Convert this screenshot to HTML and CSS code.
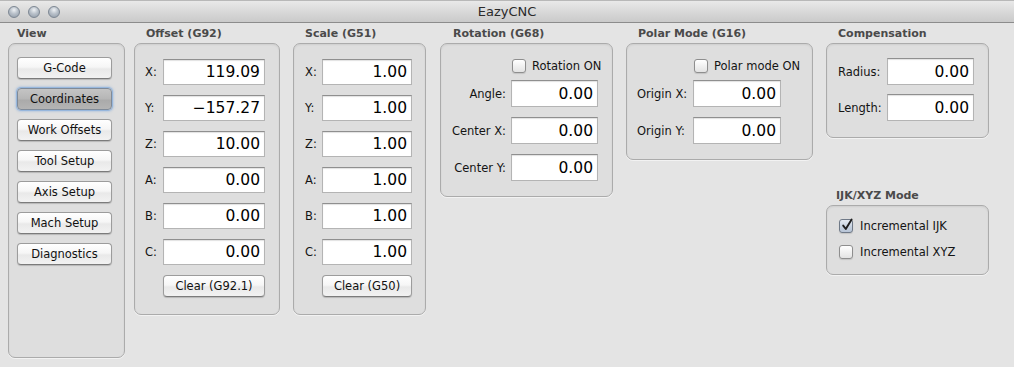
FILE: index.html
```html
<!DOCTYPE html>
<html>
<head>
<meta charset="utf-8">
<title>EazyCNC</title>
<link rel="stylesheet" href="styles.css">
</head>
<body>
<div class="window">
  <header class="titlebar">
    <div class="lights"><span class="light"></span><span class="light"></span><span class="light"></span></div>
    <div class="title">EazyCNC</div>
    <div></div>
  </header>
  <main class="content">
    <section class="col col-view">
      <h2 class="col-title t-view">View</h2>
      <div class="panel panel-view">
        <div class="btn">G-Code</div>
        <div class="btn btn-sel">Coordinates</div>
        <div class="btn">Work Offsets</div>
        <div class="btn">Tool Setup</div>
        <div class="btn">Axis Setup</div>
        <div class="btn">Mach Setup</div>
        <div class="btn">Diagnostics</div>
      </div>
    </section>

    <section class="col col-offset">
      <h2 class="col-title">Offset (G92)</h2>
      <div class="panel panel-offset">
        <div class="grid grid-offset">
          <span class="lbl">X:</span><div class="field">119.09</div>
          <span class="lbl">Y:</span><div class="field">−157.27</div>
          <span class="lbl">Z:</span><div class="field">10.00</div>
          <span class="lbl">A:</span><div class="field">0.00</div>
          <span class="lbl">B:</span><div class="field">0.00</div>
          <span class="lbl">C:</span><div class="field">0.00</div>
        </div>
        <div class="btn btn-clear-offset">Clear (G92.1)</div>
      </div>
    </section>

    <section class="col col-scale">
      <h2 class="col-title">Scale (G51)</h2>
      <div class="panel panel-scale">
        <div class="grid grid-scale">
          <span class="lbl">X:</span><div class="field">1.00</div>
          <span class="lbl">Y:</span><div class="field">1.00</div>
          <span class="lbl">Z:</span><div class="field">1.00</div>
          <span class="lbl">A:</span><div class="field">1.00</div>
          <span class="lbl">B:</span><div class="field">1.00</div>
          <span class="lbl">C:</span><div class="field">1.00</div>
        </div>
        <div class="btn btn-clear-scale">Clear (G50)</div>
      </div>
    </section>

    <section class="col col-rot">
      <h2 class="col-title t-rot">Rotation (G68)</h2>
      <div class="panel panel-rot">
        <div class="check-row rot-check"><span class="cb"></span><span>Rotation ON</span></div>
        <div class="grid grid-rot">
          <span class="lbl">Angle:</span><div class="field">0.00</div>
          <span class="lbl">Center X:</span><div class="field">0.00</div>
          <span class="lbl">Center Y:</span><div class="field">0.00</div>
        </div>
      </div>
    </section>

    <section class="col col-polar">
      <h2 class="col-title">Polar Mode (G16)</h2>
      <div class="panel panel-polar">
        <div class="check-row polar-check"><span class="cb"></span><span>Polar mode ON</span></div>
        <div class="grid grid-polar">
          <span class="lbl">Origin X:</span><div class="field">0.00</div>
          <span class="lbl">Origin Y:</span><div class="field">0.00</div>
        </div>
      </div>
    </section>

    <section class="col col-comp">
      <h2 class="col-title">Compensation</h2>
      <div class="panel panel-comp">
        <div class="grid grid-comp">
          <span class="lbl">Radius:</span><div class="field">0.00</div>
          <span class="lbl">Length:</span><div class="field">0.00</div>
        </div>
      </div>
      <h2 class="col-title t-ijk">IJK/XYZ Mode</h2>
      <div class="panel panel-ijk">
        <div class="check-row"><span class="cb cb-on"><svg width="14" height="14" viewBox="0 0 14 14"><path d="M3.2 7.6 L5.8 11 L11.6 1.6" fill="none" stroke="#1e1e1e" stroke-width="1.9" stroke-linecap="round" stroke-linejoin="round"/></svg></span><span>Incremental IJK</span></div>
        <div class="check-row"><span class="cb"></span><span>Incremental XYZ</span></div>
      </div>
    </section>
  </main>
</div>
</body>
</html>
```

FILE: styles.css
```css
* { box-sizing: border-box; }
html, body { margin: 0; padding: 0; }
body {
  width: 1014px;
  height: 367px;
  overflow: hidden;
  background: #e4e4e4;
  font-family: "DejaVu Sans", "Liberation Sans", sans-serif;
  font-size: 11.5px;
  color: #141414;
}
.window { width: 1014px; height: 367px; }

.titlebar {
  height: 23px;
  display: grid;
  grid-template-columns: 1fr auto 1fr;
  align-items: center;
  background: linear-gradient(#e9e9e9, #d6d6d6 60%, #cacaca);
  border-top: 1px solid #b8b8b8;
  border-bottom: 1px solid #8c8c8c;
}
.lights { display: flex; gap: 8px; padding-left: 8px; }
.light {
  width: 12px;
  height: 12px;
  border-radius: 50%;
  border: 1px solid #7d8793;
  background: radial-gradient(circle at 50% 30%, #eef1f4 0%, #b9c1ca 45%, #8e99a6 100%);
}
.title { font-size: 13px; color: #2a2a2a; }

.content {
  display: flex;
  align-items: flex-start;
  padding-left: 8px;
}
.col { display: flex; flex-direction: column; }
.col-title {
  margin: 0;
  height: 20px;
  line-height: 21px;
  padding-left: 12px;
  font-size: 11px;
  font-weight: bold;
  color: #4a4a4a;
  white-space: nowrap;
}
.t-view { padding-left: 9px; }
.t-rot { padding-left: 13px; }
.t-ijk { margin-top: 47px; padding-left: 10px; }

.panel {
  border: 1px solid #ababab;
  border-radius: 7px;
  background: #dedede;
  box-shadow: inset 0 1px 2px rgba(0,0,0,0.07), 0 1px 0 rgba(255,255,255,0.5);
}

.col-view { width: 117px; margin-right: 9px; }
.col-offset { width: 146px; margin-right: 13px; }
.col-scale { width: 133px; margin-right: 14px; }
.col-rot { width: 173px; margin-right: 13px; }
.col-polar { width: 187px; margin-right: 13px; }
.col-comp { width: 163px; }

.panel-view {
  height: 315px;
  padding: 13px 0 0 8px;
  display: flex;
  flex-direction: column;
  gap: 9px;
}
.btn {
  height: 22px;
  width: 95px;
  display: flex;
  align-items: center;
  justify-content: center;
  border: 1px solid #9c9c9c;
  border-bottom-color: #7b7b7b;
  border-radius: 4px;
  background: linear-gradient(#ffffff, #f6f6f6 45%, #e9e9e9 55%, #f2f2f2);
  box-shadow: 0 1px 1px rgba(0,0,0,0.18);
  color: #111;
  white-space: nowrap;
}
.btn-sel {
  background: linear-gradient(#c4c4c4, #b6b6b6 50%, #aaaaaa 55%, #b4b4b4);
  border-color: #7f8a98;
  box-shadow: 0 0 0 1px rgba(120,165,220,0.55), 0 0 2px 2px rgba(120,165,220,0.35);
}

.grid {
  display: grid;
  align-items: center;
}
.field {
  background: #ffffff;
  border: 1px solid #b4b4b4;
  border-top-color: #8f8f8f;
  box-shadow: inset 0 1px 1px rgba(0,0,0,0.12);
  text-align: right;
  padding-right: 4px;
  font-size: 15.5px;
  color: #000;
  display: flex;
  align-items: center;
  justify-content: flex-end;
  height: 100%;
}
.lbl { white-space: nowrap; }

.panel-offset { height: 272px; padding: 15px 0 0 10px; }
.grid-offset {
  grid-template-columns: 18px 102px;
  grid-auto-rows: 26px;
  row-gap: 10px;
}
.btn-clear-offset { width: 102px; margin: 10px 0 0 18px; }

.panel-scale { height: 272px; padding: 15px 0 0 11px; }
.grid-scale {
  grid-template-columns: 17px 90px;
  grid-auto-rows: 26px;
  row-gap: 10px;
}
.btn-clear-scale { width: 90px; margin: 10px 0 0 17px; }

.check-row {
  display: flex;
  align-items: center;
  gap: 6px;
  height: 14px;
  white-space: nowrap;
}
.cb {
  width: 14px;
  height: 14px;
  flex: none;
  border: 1px solid #8e8e8e;
  border-radius: 3px;
  background: linear-gradient(#ffffff, #f1f1f1 50%, #e3e3e3);
  box-shadow: 0 1px 1px rgba(0,0,0,0.12);
  display: flex;
  align-items: center;
  justify-content: center;
  overflow: visible;
}
.cb svg { display: block; margin-top: -2px; margin-left: 1px; overflow: visible; }
.cb-on {
  background: linear-gradient(#e4e9f1, #c7d2e0 55%, #b7c4d6);
  border-color: #6f7987;
}

.panel-rot { height: 154px; padding: 15px 0 0 10px; }
.rot-check { margin: 0 0 7px 61px; }
.grid-rot {
  grid-template-columns: 55px 87px;
  column-gap: 5px;
  grid-auto-rows: 27px;
  row-gap: 10px;
}
.grid-rot .lbl { text-align: right; }

.panel-polar { height: 117px; padding: 15px 0 0 10px; }
.polar-check { margin: 0 0 7px 57px; }
.grid-polar {
  grid-template-columns: 51px 88px;
  column-gap: 5px;
  grid-auto-rows: 27px;
  row-gap: 10px;
}

.panel-comp { height: 95px; padding: 14px 0 0 11px; }
.grid-comp {
  grid-template-columns: 44px 87px;
  column-gap: 5px;
  grid-auto-rows: 27px;
  row-gap: 9px;
}

.panel-ijk {
  height: 70px;
  padding: 13px 0 0 12px;
  display: flex;
  flex-direction: column;
  gap: 12px;
}
.panel-ijk .check-row { gap: 7px; }
```
